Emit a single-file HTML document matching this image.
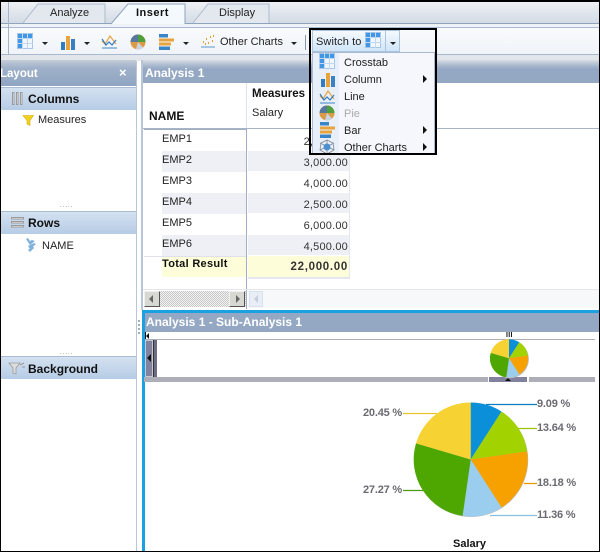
<!DOCTYPE html>
<html><head><meta charset="utf-8">
<style>
html,body{margin:0;padding:0;background:#fff}
#p{position:relative;width:600px;height:552px;overflow:hidden;background:#fff;font-family:"Liberation Sans",sans-serif;font-size:11px;color:#222}
#p div{position:absolute;box-sizing:border-box}
.t{white-space:nowrap;line-height:13px;letter-spacing:0}
.b{font-weight:bold;color:#111}
.h{font-weight:bold;color:#fff;letter-spacing:0}
.hd{background:linear-gradient(#d4e2f1,#b6cce5);border-top:1px solid #a9bcd3}
.v{width:60px;text-align:right;color:#333;letter-spacing:.2px}
.p{font-weight:bold;color:#6a6a72;letter-spacing:-.2px}
.ar{width:0;height:0;border-left:4px solid #111;border-top:4px solid transparent;border-bottom:4px solid transparent}
.dn{width:0;height:0;border-top:3px solid #222;border-left:3px solid transparent;border-right:3px solid transparent}
svg{position:absolute;overflow:visible}
</style></head><body>
<div id="p">
<svg width="0" height="0" style="position:absolute"><defs>
<g id="ct"><rect x=".5" y=".5" width="15" height="15" fill="#f0f6fc" stroke="#a5c4e6"/><rect x="1" y="1" width="14" height="4" fill="#3f97e6"/><rect x="1" y="1" width="4" height="14" fill="#3f97e6"/><path d="M0 5.500h16M0 10.500h16M5.500 0v16M10.500 0v16" stroke="#c2d8f0"/></g>
<g id="co"><rect x="1" y="8" width="4" height="8" fill="#2f7cc4"/><rect x="6" y="2" width="4" height="14" fill="#e8a33c"/><rect x="11" y="5" width="4" height="11" fill="#3a80c4"/></g>
<g id="li"><path d="M1 15h15" stroke="#5a98d0" stroke-width="1.200"/><path d="M1 8l3 3 5-8 6 8" fill="none" stroke="#e8a33c" stroke-width="1.200"/><path d="M1 6l4 6 3-3 3 3 4-5" fill="none" stroke="#2f7cc4" stroke-width="1.200"/></g>
<g id="pi"><circle cx="8" cy="8" r="7.500" fill="#dd9a45"/><path d="M8 8V.5A7.500 7.500 0 0 1 15.500 8z" fill="#4f9f3c"/><path d="M8 8H.5A7.500 7.500 0 0 1 8 .5z" fill="#5878a0"/><path d="M8 8l5 5.500A7.500 7.500 0 0 1 6 15.300z" fill="#c8d4e4"/></g>
<g id="ba"><rect x="0" y="0" width="9" height="3.500" fill="#3a84c8"/><rect x="0" y="4.500" width="15" height="3" fill="#e8a33c"/><rect x="0" y="8.500" width="12" height="3" fill="#e8a33c"/><rect x="0" y="12.500" width="11" height="3.500" fill="#3a84c8"/></g>
</defs></svg>

<!-- top tab strip -->
<div style="left:0;top:0;width:600px;height:24px;background:linear-gradient(#f1f3f6,#d3dbe5);border-bottom:1px solid #8ea3be"></div>
<div style="left:0;top:24px;width:600px;height:4px;background:#eef1f6;border-bottom:1px solid #a9b9cf"></div>
<div style="left:0;top:28px;width:600px;height:27px;background:linear-gradient(#f9fbfd,#f0f3f8);border-bottom:1px solid #a9b9cf"></div>
<div style="left:0;top:55px;width:600px;height:6px;background:#e2e5ea"></div>
<div style="left:8px;top:0;width:1px;height:55px;background:#a7b4c7"></div>

<svg style="left:0;top:0" width="600" height="30">
<path d="M23 23L38 4H105V23" fill="#e3e8ef" stroke="#aebccd"/>
<path d="M193 23L208 4H269V23" fill="#e3e8ef" stroke="#aebccd"/>
<path d="M111 24L128 4H185V24" fill="#f4f9fd" stroke="#8ea3be"/>
</svg>
<div class="t" style="left:50px;top:7px">Analyze</div>
<div class="t b" style="left:136px;top:7px;letter-spacing:.5px">Insert</div>
<div class="t" style="left:219px;top:7px">Display</div>

<!-- toolbar -->
<svg style="left:17px;top:33px" width="16" height="16"><use href="#ct"/></svg>
<div class="dn" style="left:42px;top:42px"></div>
<svg style="left:60px;top:34px" width="16" height="16"><use href="#co"/></svg>
<div class="dn" style="left:84px;top:42px"></div>
<svg style="left:101px;top:33px" width="16" height="16"><use href="#li"/></svg>
<svg style="left:130px;top:34px" width="16" height="16"><use href="#pi"/></svg>
<svg style="left:159px;top:34px" width="16" height="16"><use href="#ba"/></svg>
<div class="dn" style="left:183px;top:42px"></div>
<svg style="left:201px;top:34px" width="14" height="14"><path d="M0 13h14" stroke="#5a98d0"/><path d="M2 8h1M5 5h1M7 9h1M9 3h1M11 7h1M12 2h1M4 10h1" stroke="#e0a030" stroke-width="2"/></svg>
<div class="t" style="left:220px;top:36px">Other Charts</div>
<div class="dn" style="left:291px;top:42px"></div>
<div style="left:305px;top:35px;width:1px;height:15px;background:#8b98a8"></div>

<!-- left panel -->
<div style="left:1px;top:61px;width:136px;height:490px;background:#fff;border-right:1px solid #b8c6d8"></div>
<div style="left:1px;top:60px;width:135px;height:26px;background:linear-gradient(#c4ccd8,#a0b1c9 30%,#8fa5c2)"></div>
<div class="t h" style="left:0;top:68px;font-size:11.500px">Layout</div>
<div class="t h" style="left:119px;top:66px;font-size:13px">×</div>

<div class="hd" style="left:1px;top:87px;width:135px;height:23px"></div>
<svg style="left:11px;top:92px" width="12" height="13"><path d="M1.500 .5h1.500v12H1.500zM5.500 .5h1.500v12H5.500zM9.500 .5h1.500v12H9.500z" fill="#f4f4f4" stroke="#9a9a9a"/></svg>
<div class="t b" style="left:28px;top:93px;font-size:12px">Columns</div>
<svg style="left:23px;top:115px" width="11" height="11"><path d="M0 .5h10.500L7 5.500V10.500L4 9V5.500z" fill="#f2d21e" stroke="#d4a80c" stroke-width=".6"/></svg>
<div class="t" style="left:38px;top:114px">Measures</div>
<div class="t" style="left:60px;top:203px;font-size:6px;line-height:6px;letter-spacing:1px;color:#777">.....</div>

<div class="hd" style="left:1px;top:211px;width:135px;height:23px"></div>
<svg style="left:11px;top:216px" width="13" height="12"><path d="M.5 1.500h12v1.500H.5zM.5 5.500h12v1.500H.5zM.5 9.500h12v1.500H.5z" fill="#f4f4f4" stroke="#9a9a9a"/></svg>
<div class="t b" style="left:28px;top:217px;font-size:12px">Rows</div>
<svg style="left:25px;top:238px" width="12" height="14"><path d="M3 0l2 3-2 1-2-3zM10 3L5 7 3 4 7 2zM11 6L5 11 3 8 9 5zM9 10l-4 4-2-2 5-4z" fill="#7fb2dd"/></svg>
<div class="t" style="left:42px;top:240px">NAME</div>
<div class="t" style="left:60px;top:350px;font-size:6px;line-height:6px;letter-spacing:1px;color:#777">.....</div>

<div class="hd" style="left:1px;top:356px;width:135px;height:23px"></div>
<svg style="left:9px;top:362px" width="17" height="13"><path d="M0 1h11L7 6v6L4 11V6z" fill="#ddd" stroke="#999" stroke-width=".8"/><path d="M11 3l4-2M13 5h3" stroke="#999"/></svg>
<div class="t b" style="left:28px;top:363px;font-size:12px">Background</div>

<!-- top analysis panel -->
<div style="left:141px;top:60px;width:459px;height:250px;background:#fff;border-left:2px solid #b8c6d8"></div>
<div style="left:143px;top:60px;width:457px;height:23px;background:linear-gradient(#d9dde4,#a7b7cd 25%,#94a8c4 40%)"></div>
<div class="t h" style="left:145px;top:67px;font-size:12px">Analysis 1</div>

<div style="left:246px;top:83px;width:1px;height:45px;background:#dfe4ec"></div>
<div style="left:143px;top:128px;width:457px;height:1px;background:#a7b3c6"></div>
<div class="t b" style="left:149px;top:110px;font-size:12px">NAME</div>
<div class="t b" style="left:252px;top:88px;font-size:11.500px">Measures</div>
<div class="t" style="left:252px;top:107px">Salary</div>

<div style="left:246px;top:129px;width:1px;height:180px;background:#a0aec3"></div>
<div style="left:144px;top:129px;width:102px;height:1px;background:#a0aec3"></div>
<div style="left:349px;top:129px;width:1px;height:150px;background:#e4e6f2"></div>
<div style="left:248px;top:277px;width:102px;height:2px;background:#e4e6f2"></div>

<div style="left:162px;top:151px;width:84px;height:21px;background:#eef0f6"></div>
<div style="left:248px;top:151px;width:101px;height:20px;background:#eef0f6"></div>
<div style="left:162px;top:193px;width:84px;height:21px;background:#eef0f6"></div>
<div style="left:248px;top:193px;width:101px;height:20px;background:#eef0f6"></div>
<div style="left:162px;top:235px;width:84px;height:21px;background:#eef0f6"></div>
<div style="left:248px;top:235px;width:101px;height:20px;background:#eef0f6"></div>
<div style="left:144px;top:256px;width:102px;height:1px;background:#dfe2ea"></div>
<div style="left:162px;top:257px;width:84px;height:20px;background:#fdfdd9"></div>
<div style="left:248px;top:256px;width:101px;height:21px;background:#fdfdd9"></div>

<div class="t" style="left:162px;top:133px">EMP1</div>
<div class="t" style="left:162px;top:154px">EMP2</div>
<div class="t" style="left:162px;top:175px">EMP3</div>
<div class="t" style="left:162px;top:196px">EMP4</div>
<div class="t" style="left:162px;top:217px">EMP5</div>
<div class="t" style="left:162px;top:238px">EMP6</div>
<div class="t b" style="left:162px;top:258px;letter-spacing:.3px">Total Result</div>
<div class="t v" style="left:288px;top:136px">2,000.00</div>
<div class="t v" style="left:288px;top:157px">3,000.00</div>
<div class="t v" style="left:288px;top:178px">4,000.00</div>
<div class="t v" style="left:288px;top:199px">2,500.00</div>
<div class="t v" style="left:288px;top:220px">6,000.00</div>
<div class="t v" style="left:288px;top:241px">4,500.00</div>
<div class="t v b" style="left:288px;top:261px;font-size:11.500px;letter-spacing:.7px">22,000.00</div>

<!-- scrollbars -->
<div style="left:143px;top:289px;width:457px;height:1px;background:#e3e6ec"></div>
<div style="left:248px;top:290px;width:352px;height:18px;background:#f7f8fa"></div>
<div style="left:144px;top:291px;width:102px;height:16px;background:repeating-conic-gradient(#c8c8c8 0 25%,#f2f2f2 0 50%) 0 0/2px 2px"></div>
<div style="left:144px;top:291px;width:16px;height:16px;background:#d8d8d2;border:1px solid #f0f0f0;border-right-color:#555;border-bottom-color:#555"></div>
<div style="left:229px;top:291px;width:16px;height:16px;background:#d8d8d2;border:1px solid #f0f0f0;border-right-color:#555;border-bottom-color:#555"></div>
<div style="left:249px;top:291px;width:14px;height:16px;background:#e9edf6;border:1px solid #d9e0ee"></div>
<div style="left:149px;top:295px;width:0;height:0;border-right:4px solid #666;border-top:4px solid transparent;border-bottom:4px solid transparent"></div>
<div style="left:236px;top:295px;width:0;height:0;border-left:4px solid #666;border-top:4px solid transparent;border-bottom:4px solid transparent"></div>
<div style="left:254px;top:295px;width:0;height:0;border-right:4px solid #c6cfe0;border-top:4px solid transparent;border-bottom:4px solid transparent"></div>

<!-- splitter grip -->
<div style="left:138px;top:320px;width:2px;height:14px;border-left:2px dotted #a6aebb"></div>

<!-- sub-analysis panel -->
<div style="left:142px;top:310px;width:458px;height:241px;background:#fff;border-left:3px solid #1ba1e2;border-top:3px solid #1ba1e2"></div>
<div style="left:145px;top:313px;width:455px;height:19px;background:#94a8c4"></div>
<div class="t h" style="left:146px;top:316px;font-size:12px">Analysis 1 - Sub-Analysis 1</div>
<div style="left:145px;top:332px;width:1px;height:7px;background:#111"></div>
<div style="left:146px;top:333px;width:0;height:0;border-right:3px solid #111;border-top:3px solid transparent;border-bottom:3px solid transparent"></div>
<div class="t" style="left:506px;top:332px;font-size:7px;line-height:7px;letter-spacing:.3px;color:#111;font-weight:bold">III</div>
<div style="left:145px;top:339px;width:450px;height:1px;background:#aeaeb8"></div>
<div style="left:145px;top:340px;width:8px;height:37px;background:#82829f;border:1px solid #c8c8d4"></div>
<div style="left:147px;top:354px;width:0;height:0;border-right:4px solid #111;border-top:4px solid transparent;border-bottom:4px solid transparent"></div>
<div style="left:153px;top:340px;width:5px;height:37px;background:#fff;border-left:1px solid #333;border-right:0"></div>
<div style="left:154px;top:340px;width:3px;height:37px;background:#6c6c86"></div>
<div style="left:144px;top:377px;width:451px;height:5px;background:#aeaeb8"></div>
<div style="left:488px;top:377px;width:1px;height:5px;background:#fff"></div>
<div style="left:489px;top:377px;width:38px;height:5px;background:#82829f"></div>
<div style="left:527px;top:377px;width:2px;height:5px;background:#fff"></div>
<div style="left:505px;top:378px;width:0;height:0;border-bottom:3px solid #111;border-left:3px solid transparent;border-right:3px solid transparent"></div>

<!-- charts -->
<svg style="left:0;top:0" width="600" height="552">
<defs><g id="pie">
<path d="M470.700 459.500L470.700 402.500A57 57 0 0 1 501.500 411.500Z" fill="#0a8fd8"/>
<path d="M470.700 459.500L501.500 411.500A57 57 0 0 1 527.100 451.400Z" fill="#a2d200"/>
<path d="M470.700 459.500L527.100 451.400A57 57 0 0 1 501.500 507.500Z" fill="#f7a100"/>
<path d="M470.700 459.500L501.500 507.500A57 57 0 0 1 462.600 515.900Z" fill="#9bcdee"/>
<path d="M470.700 459.500L462.600 515.900A57 57 0 0 1 416 443.400Z" fill="#4ea700"/>
<path d="M470.700 459.500L416 443.400A57 57 0 0 1 470.700 402.500Z" fill="#f6d232"/>
</g></defs>
<circle cx="471.200" cy="460" r="57" fill="#bbb"/>
<use href="#pie"/>
<g transform="translate(509 358.300) scale(.335) translate(-470.700 -459.500)"><circle cx="473" cy="462" r="57" fill="#bbb"/><use href="#pie"/></g>
<g fill="none" stroke-width="1.300">
<path d="M486 404.500H537" stroke="#0a7fc0"/>
<path d="M518 428.500H537" stroke="#9cc400"/>
<path d="M524 483.500H537" stroke="#e89800"/>
<path d="M490 515.500H537" stroke="#8cc0e0"/>
<path d="M403 490.500H423" stroke="#4e9a10"/>
<path d="M403 413.500H437" stroke="#e6c52c"/>
</g>
</svg>
<div class="t p" style="left:537px;top:398px">9.09 %</div>
<div class="t p" style="left:537px;top:422px">13.64 %</div>
<div class="t p" style="left:537px;top:477px">18.18 %</div>
<div class="t p" style="left:537px;top:509px">11.36 %</div>
<div class="t p" style="left:363px;top:484px">27.27 %</div>
<div class="t p" style="left:363px;top:407px">20.45 %</div>
<div class="t b" style="left:453px;top:538px;color:#111">Salary</div>

<!-- switch-to menu -->
<div style="left:312px;top:30px;width:74px;height:22px;background:linear-gradient(#f6fafe,#cfe6f8);border:1px solid #a9c4dc"></div>
<div style="left:385px;top:30px;width:15px;height:22px;background:linear-gradient(#f6fafe,#cfe6f8);border:1px solid #a9c4dc"></div>
<div class="t" style="left:316px;top:36px;letter-spacing:.1px">Switch to</div>
<svg style="left:365px;top:32px" width="16" height="17"><use href="#ct"/></svg>
<div class="dn" style="left:390px;top:42px"></div>
<div style="left:312px;top:52px;width:123px;height:103px;background:#f5f7fc;border:1px solid #a9b9cf"></div>
<div style="left:313px;top:53px;width:26px;height:101px;background:#e9eff8"></div>
<svg style="left:319px;top:53px" width="16" height="16"><use href="#ct"/></svg>
<svg style="left:320px;top:71px" width="16" height="16"><use href="#co"/></svg>
<svg style="left:319px;top:88px" width="16" height="16"><use href="#li"/></svg>
<svg style="left:319px;top:105px" width="16" height="16"><use href="#pi"/></svg>
<svg style="left:320px;top:122px" width="16" height="16"><use href="#ba"/></svg>
<svg style="left:319px;top:139px" width="16" height="16"><path d="M8 1l6 3 1 7-7 4-7-4 1-7zM8 1v14M1 11l14-7M15 11L1 4" fill="none" stroke="#7d8794" stroke-width=".8"/><circle cx="8" cy="8" r="3.500" fill="#4a90d0"/></svg>
<div class="t" style="left:344px;top:57px">Crosstab</div>
<div class="t" style="left:344px;top:74px">Column</div>
<div class="t" style="left:344px;top:91px">Line</div>
<div class="t" style="left:344px;top:108px;color:#aaa">Pie</div>
<div class="t" style="left:344px;top:125px">Bar</div>
<div class="t" style="left:344px;top:142px">Other Charts</div>
<div class="ar" style="left:423px;top:75px"></div>
<div class="ar" style="left:423px;top:126px"></div>
<div class="ar" style="left:423px;top:143px"></div>
<div style="left:309px;top:28px;width:128px;height:127px;border:2px solid #000"></div>

<!-- outer frame -->
<div style="left:0;top:0;width:600px;height:552px;border:1px solid #000;border-top-width:2px"></div>
</div>
</body></html>
